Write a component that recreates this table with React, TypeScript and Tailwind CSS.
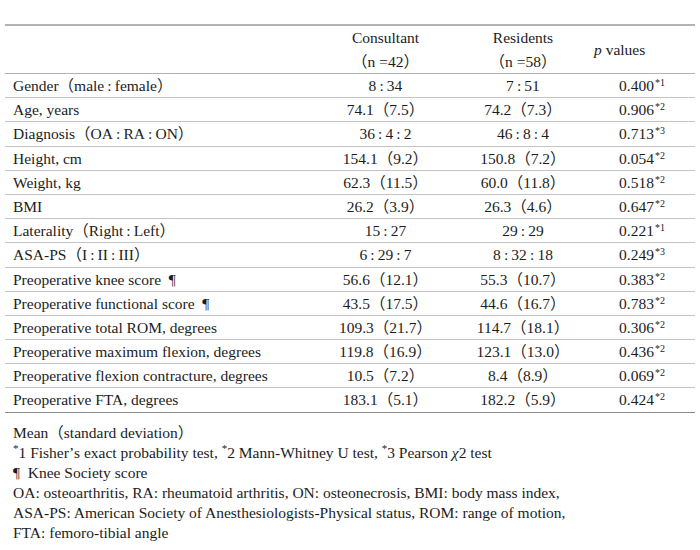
const rows: [string, string, string, string, string][] = [
  ["Gender（male\u2009:\u2009female）", "8\u2009:\u200934", "7\u2009:\u200951", "0.400", "*1"],
  ["Age, years", "74.1（7.5）", "74.2（7.3）", "0.906", "*2"],
  ["Diagnosis（OA\u2009:\u2009RA\u2009:\u2009ON）", "36\u2009:\u20094\u2009:\u20092", "46\u2009:\u20098\u2009:\u20094", "0.713", "*3"],
  ["Height, cm", "154.1（9.2）", "150.8（7.2）", "0.054", "*2"],
  ["Weight, kg", "62.3（11.5）", "60.0（11.8）", "0.518", "*2"],
  ["BMI", "26.2（3.9）", "26.3（4.6）", "0.647", "*2"],
  ["Laterality（Right\u2009:\u2009Left）", "15\u2009:\u200927", "29\u2009:\u200929", "0.221", "*1"],
  ["ASA-PS（I\u2009:\u2009II\u2009:\u2009III）", "6\u2009:\u200929\u2009:\u20097", "8\u2009:\u200932\u2009:\u200918", "0.249", "*3"],
  ["Preoperative knee score  ¶", "56.6（12.1）", "55.3（10.7）", "0.383", "*2"],
  ["Preoperative functional score  ¶", "43.5（17.5）", "44.6（16.7）", "0.783", "*2"],
  ["Preoperative total ROM, degrees", "109.3（21.7）", "114.7（18.1）", "0.306", "*2"],
  ["Preoperative maximum flexion, degrees", "119.8（16.9）", "123.1（13.0）", "0.436", "*2"],
  ["Preoperative flexion contracture, degrees", "10.5（7.2）", "8.4（8.9）", "0.069", "*2"],
  ["Preoperative FTA, degrees", "183.1（5.1）", "182.2（5.9）", "0.424", "*2"],
];

export default function App() {
  return (
    <div className="w-[700px] h-[550px] bg-white text-[#1c1c1c] font-[family-name:Liberation_Serif,Noto_Sans_CJK_JP,serif] text-[15.5px] pt-[24px] px-[5px]">
      <div className="border-t-2 border-[#b3b3b3]">
        {/* header */}
        <div className="grid grid-cols-[313px_135px_140px_1fr] h-[48px] border-b border-[#b3b3b3] items-center">
          <div />
          <div className="flex flex-col items-center leading-[24px]">
            <span>Consultant</span>
            <span>（n =42）</span>
          </div>
          <div className="flex flex-col items-center leading-[24px]">
            <span>Residents</span>
            <span>（n =58）</span>
          </div>
          <div className="pl-[1px]">
            <i>p</i> values
          </div>
        </div>
        {rows.map(([label, a, b, p, mark], i) => (
          <div
            key={label}
            className={
              "grid grid-cols-[313px_135px_140px_1fr] h-[24.2px] items-center border-b " +
              (i === rows.length - 1 ? "border-[#8c8c8c]" : "border-[#c4c4c4]")
            }
          >
            <div className="pl-[8px] whitespace-pre">{label}</div>
            <div className="text-center whitespace-nowrap">{a}</div>
            <div className="text-center whitespace-nowrap">{b}</div>
            <div className="pl-[26px] whitespace-nowrap">
              {p}
              <sup className="text-[10px] ml-[1px]">{mark}</sup>
            </div>
          </div>
        ))}
      </div>
      {/* footnotes */}
      <div className="pl-[8px] pt-[10px] leading-[20px]">
        <div>Mean（standard deviation）</div>
        <div>
          <sup className="text-[11px]">*</sup>1 Fisherʼs exact probability test, <sup className="text-[11px]">*</sup>2 Mann-Whitney U test,{" "}
          <sup className="text-[11px]">*</sup>3 Pearson <i>χ</i>2 test
        </div>
        <div className="whitespace-pre">¶  Knee Society score</div>
        <div>OA: osteoarthritis, RA: rheumatoid arthritis, ON: osteonecrosis, BMI: body mass index,</div>
        <div>ASA-PS: American Society of Anesthesiologists-Physical status, ROM: range of motion,</div>
        <div>FTA: femoro-tibial angle</div>
      </div>
    </div>
  );
}
